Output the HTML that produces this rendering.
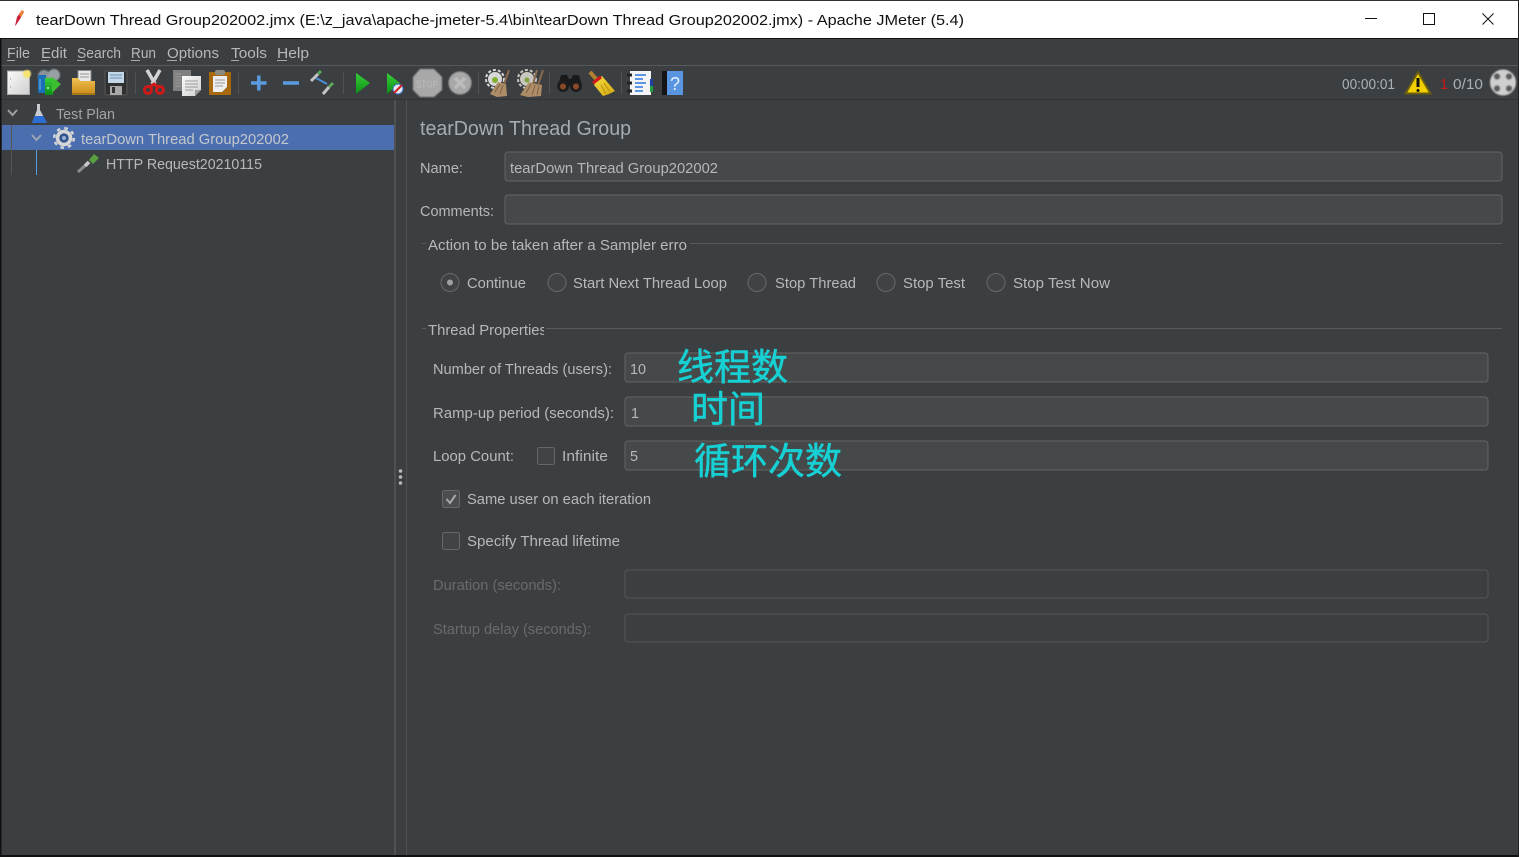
<!DOCTYPE html>
<html lang="en"><head><meta charset="utf-8"><title>tearDown Thread Group202002.jmx - Apache JMeter (5.4)</title>
<style>
html,body{margin:0;padding:0;width:1519px;height:857px;overflow:hidden;background:#3c3f41}
svg{display:block}
text{font-family:"Liberation Sans","Noto Sans CJK SC",sans-serif;font-size:14.5px;fill:#b6b8ba}
.d{fill:#686a6c}
.cn{font-family:"Noto Sans CJK SC","WenQuanYi Zen Hei",sans-serif;fill:#17d0d3;stroke:#17d0d3;stroke-width:.5px}
.ib{fill:#45494a;stroke:#646464;stroke-width:1}
.ibd{fill:#3c3f41;stroke:#555;stroke-width:1}
.cb{fill:#414446;stroke:#686868;stroke-width:1}
.ra{fill:#404345;stroke:#686868}
.ln{stroke:#5a5a5a;stroke-width:1;fill:none}
.sep{fill:#525252}
</style></head><body>
<svg width="1519" height="857" viewBox="0 0 1519 857" xmlns="http://www.w3.org/2000/svg">
<defs>
<filter id="b1" x="-20%" y="-20%" width="140%" height="140%"><feGaussianBlur stdDeviation="0.7"/></filter>
<filter id="b2" x="-20%" y="-20%" width="140%" height="140%"><feGaussianBlur stdDeviation="1.1"/></filter>
<linearGradient id="fo" x1="0" y1="0" x2="0" y2="1"><stop offset="0" stop-color="#f0c050"/><stop offset="1" stop-color="#c88a18"/></linearGradient>
<linearGradient id="pg" x1="0" y1="0" x2="1" y2="1"><stop offset="0" stop-color="#fafafa"/><stop offset="1" stop-color="#cfcfcf"/></linearGradient>
<linearGradient id="by" x1="0" y1="0" x2="1" y2="1"><stop offset="0" stop-color="#f4dc40"/><stop offset="1" stop-color="#d8a810"/></linearGradient>
<linearGradient id="gr" x1="0" y1="0" x2="0" y2="1"><stop offset="0" stop-color="#38d038"/><stop offset="1" stop-color="#0c8c18"/></linearGradient>
<clipPath id="tp"><rect x="426" y="320" width="118" height="20"/></clipPath>
</defs>
<rect width="1519" height="857" fill="#3c3f41"/>
<!-- title bar -->
<rect width="1519" height="38" fill="#fff"/>
<rect y="38" width="1519" height="1" fill="#111"/>
<rect width="1519" height="1" fill="#333"/>
<path d="M15 26 L17 17 L22 10 L24 12 L20 19 L16 25Z" fill="#c8203c"/><path d="M19 15L22 10 24 12 21 17Z" fill="#f08030"/>
<text x="36" y="25" textLength="928" lengthAdjust="spacingAndGlyphs" style="fill:#111;font-size:15px">tearDown Thread Group202002.jmx (E:\z_java\apache-jmeter-5.4\bin\tearDown Thread Group202002.jmx) - Apache JMeter (5.4)</text>
<path d="M1365 18.500H1377" stroke="#111" stroke-width="1"/>
<rect x="1423.500" y="13.500" width="11" height="11" fill="none" stroke="#111"/>
<path d="M1482.500 13.500L1493.500 24.500M1493.500 13.500L1482.500 24.500" stroke="#111" fill="none"/>
<!-- menu -->
<g>
<text x="7" y="58" textLength="23" lengthAdjust="spacingAndGlyphs">File</text><path d="M7 60.500h8" stroke="#aaa"/>
<text x="41" y="58" textLength="26" lengthAdjust="spacingAndGlyphs">Edit</text><path d="M41 60.500h8" stroke="#aaa"/>
<text x="77" y="58" textLength="44" lengthAdjust="spacingAndGlyphs">Search</text><path d="M77 60.500h8" stroke="#aaa"/>
<text x="131" y="58" textLength="25" lengthAdjust="spacingAndGlyphs">Run</text><path d="M131 60.500h9" stroke="#aaa"/>
<text x="167" y="58" textLength="52" lengthAdjust="spacingAndGlyphs">Options</text><path d="M167 60.500h10" stroke="#aaa"/>
<text x="231" y="58" textLength="36" lengthAdjust="spacingAndGlyphs">Tools</text><path d="M231 60.500h8" stroke="#aaa"/>
<text x="277" y="58" textLength="32" lengthAdjust="spacingAndGlyphs">Help</text><path d="M277 60.500h10" stroke="#aaa"/>
</g>
<rect y="65" x="1" width="1517" height="1" fill="#565859"/>
<rect y="99" x="1" width="1517" height="1" fill="#323232"/>
<!-- new -->
<rect x="7.500" y="71" width="22" height="23.500" fill="url(#pg)" stroke="#aaa"/><circle cx="27" cy="74" r="4" fill="#f6e470" filter="url(#b1)"/><path d="M10 79h1M10 87h1" stroke="#888"/>
<!-- templates -->
<g filter="url(#b1)"><circle cx="44" cy="76" r="6" fill="#8a9498"/><circle cx="54" cy="75" r="6" fill="#98a0a4"/></g><rect x="38" y="75" width="8" height="18" fill="#1a70b8"/><rect x="45" y="78" width="8" height="17" fill="url(#gr)"/><path d="M52 77l9 7-9 9z" fill="#3cc030"/><path d="M40 79v11" stroke="#7ab0e0"/><circle cx="48" cy="88" r="1" fill="#d0f0d0"/>
<!-- open -->
<rect x="78" y="70.500" width="13" height="12" fill="#e8e8e8" stroke="#8a8a8a"/><path d="M80 74h9M80 77h9" stroke="#999"/><path d="M72 78h6l2 3h15v12a2 2 0 0 1-2 2H74a2 2 0 0 1-2-2z" fill="url(#fo)"/><path d="M72 93h23v2H72z" fill="#a8761a"/>
<!-- save -->
<rect x="105" y="71" width="22" height="24" rx="2" fill="#303030" stroke="#585858"/><rect x="108" y="72" width="16" height="11" fill="#c4d8ea"/><path d="M110 75h12M110 78h12" stroke="#6a90b8"/><rect x="110" y="86" width="12" height="9" fill="#a8a8a8"/><rect x="112" y="87" width="3" height="6" fill="#333"/>
<rect class="sep" x="135" y="72" width="1" height="22"/>
<!-- cut -->
<path d="M147 70L155 84M160 70L152 84" stroke="#d4d4d4" stroke-width="3.500" fill="none"/>
<circle cx="148" cy="90" r="3.500" fill="none" stroke="#d01818" stroke-width="3"/><circle cx="160" cy="90" r="3.500" fill="none" stroke="#d01818" stroke-width="3"/><path d="M150 87l4-3 4 3" stroke="#d01818" stroke-width="3" fill="none"/>
<!-- copy -->
<rect x="173" y="70" width="18" height="21" fill="#808080"/><path d="M175 74h6M175 77h6M175 80h6M175 83h6M175 86h6" stroke="#9a9a9a"/><path d="M182 76h19v14l-6 6h-13z" fill="url(#pg)"/><path d="M185 81h13M185 84h13M185 87h13M185 90h8" stroke="#999"/><path d="M195 96l6-6h-6z" fill="#9a9a9a"/>
<!-- paste -->
<rect x="209" y="72" width="22" height="23" rx="1" fill="#a86a10"/><path d="M213 76h14v11l-5 5h-9z" fill="#eee"/><rect x="215" y="70" width="10" height="5" rx="2" fill="#8a8a80"/><path d="M215 80h10M215 83h10M215 86h8" stroke="#999"/>
<rect class="sep" x="238" y="72" width="1" height="22"/>
<!-- add/remove -->
<path d="M251 83h15.500M258.800 75.500v15" stroke="#5a9be0" stroke-width="3.500"/>
<path d="M283 83h16" stroke="#5a9be0" stroke-width="3.500"/>
<!-- toggle -->
<path d="M311 81l7-7" stroke="#c4c4c4" stroke-width="3"/><path d="M318 74l3-3" stroke="#58a858" stroke-width="3"/><path d="M323 94l6-7" stroke="#c4c4c4" stroke-width="3"/><path d="M329 87l4-4" stroke="#58a858" stroke-width="3"/><path d="M316 78l11 6" stroke="#4a90d8" stroke-width="2"/>
<rect class="sep" x="343" y="72" width="1" height="22"/>
<!-- run -->
<path d="M356 73l14 10-14 11z" fill="url(#gr)"/>
<path d="M387 73l13 10-13 11z" fill="url(#gr)"/><circle cx="398" cy="89" r="5" fill="#e0e8f4" stroke="#3a70c0"/><path d="M394 93l8-8" stroke="#d02020" stroke-width="2"/>
<!-- stop -->
<path d="M420 69h14l8 8v13l-8 7h-14l-7-7V77z" fill="#a8a8a8" filter="url(#b1)"/><text x="416" y="88" textLength="22" lengthAdjust="spacingAndGlyphs" style="font-size:11px;font-weight:bold;fill:#b6b6b6">STOP</text>
<circle cx="460" cy="83" r="11.500" fill="#a8a8a8" filter="url(#b1)"/><path d="M455 78l10 10M465 78l-10 10" stroke="#bcbcbc" stroke-width="3.500"/>
<rect class="sep" x="478" y="72" width="1" height="22"/>
<!-- clear -->
<circle cx="495" cy="79" r="7" fill="#d8d8d8"/><circle cx="495" cy="79" r="9" fill="none" stroke="#d8d8d8" stroke-width="2" stroke-dasharray="3 2"/><circle cx="495" cy="80" r="3" fill="#80b030"/><path d="M490 94l8-12 8 2 1 12-10 1z" fill="#ad8d68"/><path d="M495 92l5-8M500 94l3-9" stroke="#7e6248"/><path d="M504 84l5-14" stroke="#8a6a50" stroke-width="2"/>
<circle cx="527" cy="79" r="7" fill="#c8c8c0"/><circle cx="527" cy="79" r="9" fill="none" stroke="#c8c8c0" stroke-width="2" stroke-dasharray="3 2"/><circle cx="527" cy="80" r="2.500" fill="#80a040"/><path d="M520 95l9-13 13 3-1 11-13 1z" fill="#ad8d68"/><path d="M526 93l5-9M532 95l3-10M537 95l2-9" stroke="#7e6248"/><path d="M533 84l4-14M538 85l5-15" stroke="#8a6a50" stroke-width="2"/>
<rect class="sep" x="549" y="72" width="1" height="22"/>
<!-- binoculars -->
<path d="M561 75h6l2 4h2l2-4h6l3 11h-24z" fill="#1a1a1a"/><circle cx="563" cy="86" r="6" fill="#1c1c1c"/><circle cx="576" cy="86" r="6" fill="#1c1c1c"/><circle cx="563" cy="86.500" r="3" fill="#8a4a28"/><circle cx="576" cy="86.500" r="3" fill="#8a4a28"/>
<!-- broom -->
<path d="M590 72l7 8" stroke="#b08030" stroke-width="4"/><path d="M597 80l5-4 13 15-6 3-6 2-9-11z" fill="url(#by)"/><path d="M593 83l8-6" stroke="#d01818" stroke-width="3"/><path d="M601 85l5 9M604 83l6 9" stroke="#b89010"/>
<rect class="sep" x="621" y="72" width="1" height="22"/>
<!-- function helper -->
<rect x="630" y="71" width="21" height="24" fill="#f4f4f4"/><path d="M627 75h5M627 83h5M627 91h5" stroke="#222" stroke-width="3"/><path d="M635 75h11M635 79h8M635 83h11M635 87h8M635 91h8" stroke="#2878e0" stroke-width="1.500"/><rect x="650" y="79" width="3" height="7" fill="#2040a0"/><rect x="650" y="86" width="3" height="6" fill="#20a040"/>
<!-- help -->
<rect x="662" y="71" width="6" height="24" fill="#141414"/><rect x="667" y="71" width="16" height="24" fill="#5a96e0"/><text x="670" y="90" style="font-size:18px;fill:#e8f0ff">?</text>
<!-- status -->
<text x="1342" y="89" textLength="53" lengthAdjust="spacingAndGlyphs" style="fill:#a8b0b8">00:00:01</text>
<path d="M1418 72L1430.500 93.500H1405.500Z" fill="#f2d000" stroke="#6a5c10" stroke-width="2"/><path d="M1418 78v9" stroke="#111" stroke-width="3"/><circle cx="1418" cy="90.500" r="1.500" fill="#111"/>
<text x="1440" y="89" style="fill:#c81818">1</text>
<text x="1453" y="89" textLength="30" lengthAdjust="spacingAndGlyphs" style="fill:#a8b0b8">0/10</text>
<g filter="url(#b1)"><circle cx="1503" cy="82.500" r="13" fill="#cfcfcf"/><circle cx="1497" cy="76.500" r="3.200" fill="#5c5c5c"/><circle cx="1509" cy="76.500" r="3.200" fill="#5c5c5c"/><circle cx="1497" cy="88.500" r="3.200" fill="#5c5c5c"/><circle cx="1509" cy="88.500" r="3.200" fill="#5c5c5c"/></g>
<!-- tree -->
<path d="M8 110l4.500 5 4.500-5" stroke="#a0a0a0" stroke-width="2" fill="none"/>
<path d="M37 104h3v6l7 13H32l5-13z" fill="#c8ccd0"/><path d="M34.500 116h9l3.500 7H32z" fill="#2b6dd0"/>
<rect x="2" y="125" width="392" height="25" fill="#4b6eaf"/>
<path d="M32 135l4.500 5 4.500-5" stroke="#9aa4b4" stroke-width="2" fill="none"/>
<circle cx="64" cy="138" r="6.500" fill="none" stroke="#d6d6d6" stroke-width="3.500"/><circle cx="64" cy="138" r="9.800" fill="none" stroke="#d6d6d6" stroke-width="2.500" stroke-dasharray="3.500 4.200"/><circle cx="64" cy="138" r="4.500" fill="#34558c"/><circle cx="64" cy="138" r="2" fill="#9ab4d8"/>
<text x="56" y="119" textLength="59" lengthAdjust="spacingAndGlyphs" style="fill:#a4a4a4">Test Plan</text>
<text x="81" y="144" textLength="208" lengthAdjust="spacingAndGlyphs" style="fill:#c4c8cc">tearDown Thread Group202002</text>
<path d="M36.500 150v25" stroke="#5a9be0"/>
<path d="M11.500 125v50" stroke="#555"/>
<path d="M78 172l10-9" stroke="#8c8c8c" stroke-width="3"/><path d="M85 166l4-4" stroke="#c8c8c8" stroke-width="3.500"/><path d="M89 160l5-6 5 4-6 6z" fill="#58a040"/>
<text x="106" y="169" textLength="156" lengthAdjust="spacingAndGlyphs">HTTP Request20210115</text>
<!-- split -->
<rect x="394" y="100" width="2" height="755" fill="#515151"/>
<rect x="406" y="100" width="1" height="755" fill="#515151"/>
<circle cx="400.500" cy="471" r="1.800" fill="#b8b8b8"/><circle cx="400.500" cy="477" r="1.800" fill="#b8b8b8"/><circle cx="400.500" cy="483" r="1.800" fill="#b8b8b8"/>
<!-- right -->
<text x="420" y="135" textLength="211" lengthAdjust="spacingAndGlyphs" style="font-size:20px;fill:#a5acb2">tearDown Thread Group</text>
<text x="420" y="173" textLength="43" lengthAdjust="spacingAndGlyphs">Name:</text>
<rect class="ib" x="505" y="152" width="997" height="29" rx="3"/>
<text x="510" y="173" textLength="208" lengthAdjust="spacingAndGlyphs">tearDown Thread Group202002</text>
<text x="420" y="216" textLength="74" lengthAdjust="spacingAndGlyphs">Comments:</text>
<rect class="ib" x="505" y="195" width="997" height="29" rx="3"/>
<path class="ln" d="M422 243.500h4M690 243.500h812"/>
<text x="428" y="250" textLength="259" lengthAdjust="spacingAndGlyphs">Action to be taken after a Sampler erro</text>
<circle class="ra" cx="450" cy="282.500" r="9"/><circle cx="450" cy="282.500" r="3" fill="#a0a0a0"/>
<circle class="ra" cx="557" cy="282.500" r="9"/>
<circle class="ra" cx="757" cy="282.500" r="9"/>
<circle class="ra" cx="886" cy="282.500" r="9"/>
<circle class="ra" cx="996" cy="282.500" r="9"/>
<text x="467" y="288" textLength="59" lengthAdjust="spacingAndGlyphs">Continue</text>
<text x="573" y="288" textLength="154" lengthAdjust="spacingAndGlyphs">Start Next Thread Loop</text>
<text x="775" y="288" textLength="81" lengthAdjust="spacingAndGlyphs">Stop Thread</text>
<text x="903" y="288" textLength="62" lengthAdjust="spacingAndGlyphs">Stop Test</text>
<text x="1013" y="288" textLength="97" lengthAdjust="spacingAndGlyphs">Stop Test Now</text>
<path class="ln" d="M422 328.500h4M546 328.500h956"/>
<text x="428" y="335" textLength="119" lengthAdjust="spacingAndGlyphs" clip-path="url(#tp)">Thread Properties</text>
<text x="433" y="374" textLength="179" lengthAdjust="spacingAndGlyphs">Number of Threads (users):</text>
<rect class="ib" x="625" y="353" width="863" height="29" rx="3"/>
<text x="630" y="374" textLength="16" lengthAdjust="spacingAndGlyphs">10</text>
<text x="433" y="418" textLength="181" lengthAdjust="spacingAndGlyphs">Ramp-up period (seconds):</text>
<rect class="ib" x="625" y="397" width="863" height="29" rx="3"/>
<text x="631" y="418">1</text>
<text x="433" y="461" textLength="81" lengthAdjust="spacingAndGlyphs">Loop Count:</text>
<rect class="cb" x="537.500" y="447.500" width="17" height="17" rx="2"/>
<text x="562" y="461" textLength="46" lengthAdjust="spacingAndGlyphs">Infinite</text>
<rect class="ib" x="625" y="441" width="863" height="29" rx="3"/>
<text x="630" y="461">5</text>
<rect class="cb" x="442.500" y="490.500" width="17" height="17" rx="2" style="fill:#4a4e50"/>
<path d="M446.500 499l3.500 4 5.500-8" stroke="#a8a8a8" stroke-width="2" fill="none"/>
<text x="467" y="504" textLength="184" lengthAdjust="spacingAndGlyphs">Same user on each iteration</text>
<rect class="cb" x="442.500" y="532.500" width="17" height="17" rx="2"/>
<text x="467" y="546" textLength="153" lengthAdjust="spacingAndGlyphs">Specify Thread lifetime</text>
<text class="d" x="433" y="590" textLength="128" lengthAdjust="spacingAndGlyphs">Duration (seconds):</text>
<rect class="ibd" x="625" y="570" width="863" height="28" rx="3"/>
<text class="d" x="433" y="634" textLength="158" lengthAdjust="spacingAndGlyphs">Startup delay (seconds):</text>
<rect class="ibd" x="625" y="614" width="863" height="28" rx="3"/>
<!-- annotations -->
<text class="cn" x="677" y="380" textLength="111" lengthAdjust="spacingAndGlyphs" style="font-size:37px">线程数</text>
<text class="cn" x="691" y="422" textLength="74" lengthAdjust="spacingAndGlyphs" style="font-size:37px">时间</text>
<text class="cn" x="694" y="474" textLength="148" lengthAdjust="spacingAndGlyphs" style="font-size:37px">循环次数</text>
<!-- window edge -->
<rect y="855" width="1519" height="2" fill="#111"/>
<rect x="0" y="39" width="1.500" height="817" fill="#111"/>
<rect x="1518" y="0" width="1" height="857" fill="#222"/>
</svg>
</body></html>
